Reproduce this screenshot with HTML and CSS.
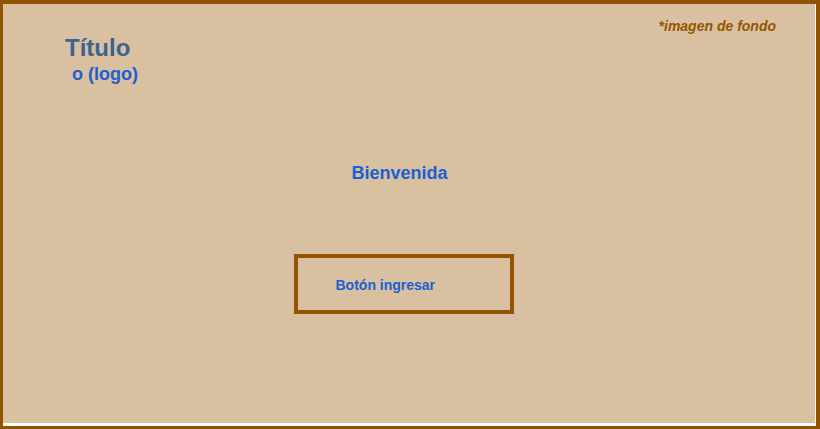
FILE: index.html
```html
<!DOCTYPE html>
<html lang="es">
<head>
<meta charset="utf-8">
<title>Bienvenida</title>
<link rel="stylesheet" href="styles.css">
</head>
<body>
<div class="frame">
  <div class="bg">
    <header class="header">
      <div class="brand">
        <div class="title">Título</div>
        <div class="logo">o (logo)</div>
      </div>
      <div class="note">*imagen de fondo</div>
    </header>
    <main class="main">
      <div class="welcome">Bienvenida</div>
      <div class="btn">Botón ingresar</div>
    </main>
  </div>
</div>
</body>
</html>
```

FILE: styles.css
```css
html, body {
  margin: 0;
  padding: 0;
  background: #ffffff;
}
body {
  font-family: "Liberation Sans", Arial, sans-serif;
  font-weight: bold;
}
.frame {
  box-sizing: border-box;
  width: 820px;
  height: 429px;
  border-style: solid;
  border-color: #925400;
  border-width: 4px 4px 3px 3px;
  background: #ffffff;
}
.bg {
  width: 812px;
  height: 419px;
  background: #d8c0a0;
}
.header {
  display: flex;
  justify-content: space-between;
  align-items: flex-start;
  padding: 11px 39px 0 62px;
}
.brand {
  margin-top: 19px;
}
.title {
  font-size: 24px;
  line-height: 28px;
  color: #3d6490;
}
.logo {
  margin-top: 2px;
  font-size: 18px;
  line-height: 21px;
  color: #1d5fd0;
  margin-left: 7px;
}
.note {
  margin-top: 3px;
  font-size: 14px;
  line-height: 16px;
  font-style: italic;
  color: #965600;
}
.main {
  display: flex;
  flex-direction: column;
  align-items: center;
  padding-right: 19px;
}
.welcome {
  margin-top: 77px;
  font-size: 18px;
  line-height: 22px;
  color: #1d5fd0;
}
.btn {
  box-sizing: border-box;
  margin-top: 70px;
  margin-left: 8px;
  width: 220px;
  height: 60px;
  border: 4px solid #925400;
  padding: 19px 0 0 38px;
  font-size: 14px;
  line-height: 16px;
  color: #1d5fd0;
}
```
